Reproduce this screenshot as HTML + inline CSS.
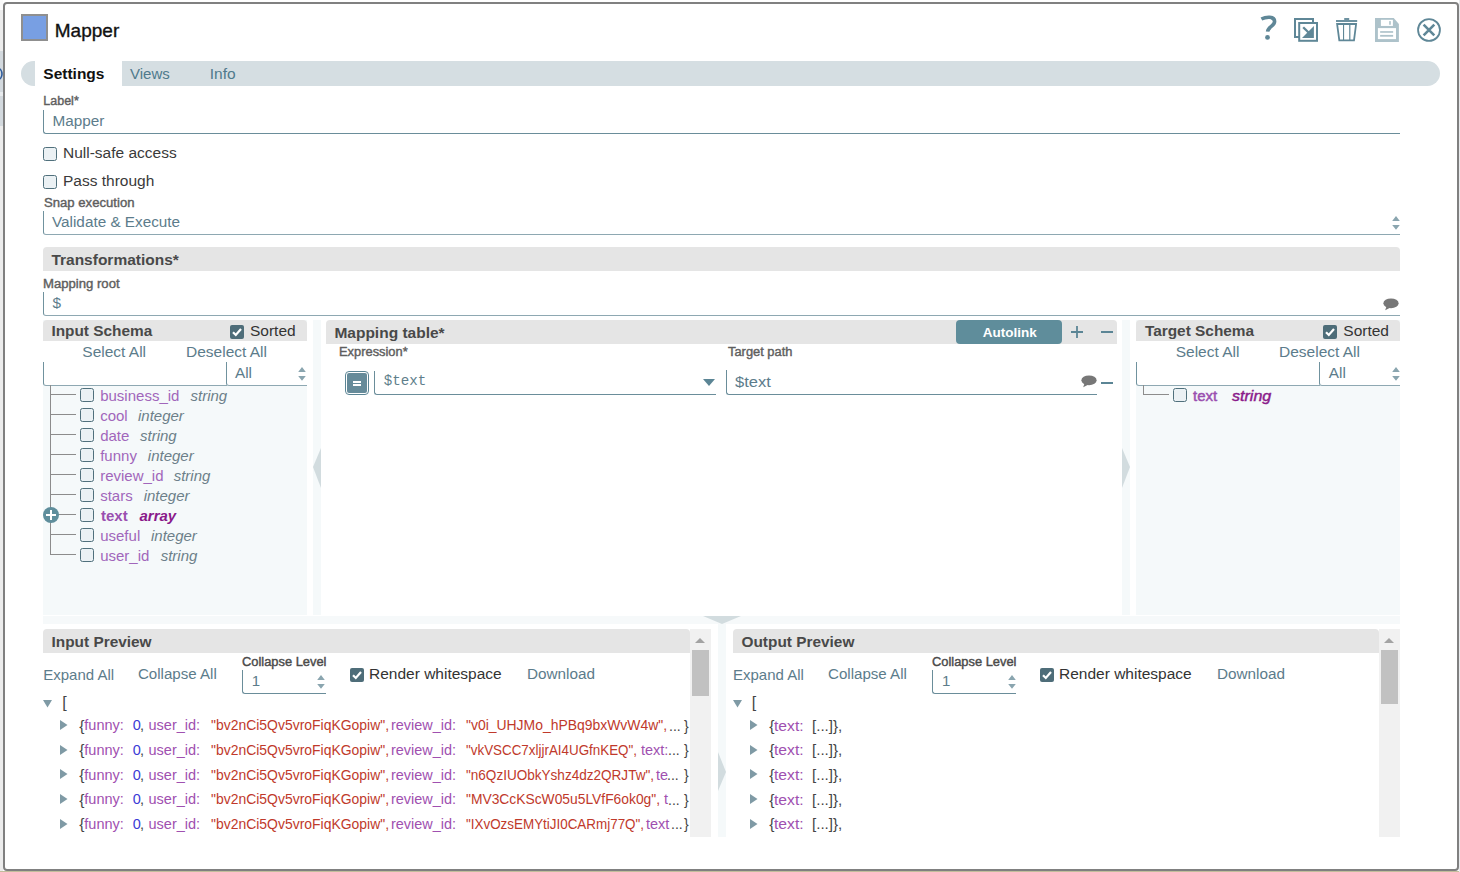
<!DOCTYPE html>
<html><head><meta charset="utf-8"><style>
html,body{margin:0;padding:0;width:1460px;height:872px;overflow:hidden;background:#fff;font-family:"Liberation Sans",sans-serif;}
.t{position:absolute;white-space:nowrap;}
.r{position:absolute;}
</style></head><body>
<div class="r" style="left:0px;top:0px;width:3px;height:872px;background:#ececec;"></div>
<div class="r" style="left:0px;top:51px;width:3px;height:75px;background:#d3d9de;"></div>
<div class="r" style="left:0px;top:92px;width:3px;height:4px;background:#e8ebee;"></div>
<svg class="r" style="left:0px;top:66px" width="3" height="16" viewBox="0 0 3 16"><ellipse cx="-2" cy="8" rx="4" ry="5.5" fill="none" stroke="#2f5d9e" stroke-width="1.6"/></svg>
<div class="r" style="left:0px;top:0px;width:3px;height:10px;background:#fafafa;"></div>
<div class="r" style="left:0px;top:871px;width:1460px;height:1px;background:#c2bd9c;"></div>
<div class="r" style="left:1459px;top:0px;width:1px;height:872px;background:#e8eaec;"></div>
<div class="r" style="left:3px;top:2px;width:1452px;height:865px;border:2px solid #808080;border-radius:4px;background:#fff;"></div>
<div class="r" style="left:21px;top:14px;width:23px;height:23px;border:2px solid #8f8f8f;background:#789fe3;"></div>
<div class="t" style="left:54.8px;top:21.32px;font-size:19px;line-height:19px;color:#111;font-weight:normal;font-style:normal;font-family:'Liberation Sans', sans-serif;-webkit-text-stroke:0.35px #111;">Mapper</div>
<svg class="r" style="left:1254px;top:12px" width="30" height="34" viewBox="0 0 30 34"><path d="M7.4 7 C11 5.2 20.6 3.4 20.6 9.6 C20.6 14.2 14 14.6 13.6 19.6" fill="none" stroke="#5f8797" stroke-width="3.6"/><circle cx="13.5" cy="25.4" r="2.4" fill="#5f8797"/></svg>
<svg class="r" style="left:1288px;top:12px" width="76" height="34" viewBox="0 0 76 34"><path d="M11 25 H7 V7 H25 V10.8" fill="none" stroke="#5f8797" stroke-width="2"/><rect x="11.2" y="11" width="17.8" height="17.8" fill="#fff" stroke="#5f8797" stroke-width="2"/><path d="M25.9 14 V25.9 H14 Z" fill="#5f8797"/><path d="M15.2 15.2 L21 21" stroke="#5f8797" stroke-width="2.3"/><rect x="56.2" y="6.1" width="5" height="1.8" fill="#5f8797"/><rect x="48" y="8.1" width="21.2" height="1.8" fill="#5f8797"/><path d="M49.1 12 H68.1 L66 28.3 H51.3 Z" fill="none" stroke="#5f8797" stroke-width="1.8"/><rect x="55" y="12" width="1.1" height="16.5" fill="#5f8797"/><rect x="61.2" y="12" width="1.2" height="16.5" fill="#5f8797"/></svg>
<svg class="r" style="left:1370px;top:12px" width="76" height="34" viewBox="0 0 76 34"><path d="M5 6.1 H23.7 L28.9 12 V29.9 H5 Z" fill="#adc2ca"/><rect x="10.9" y="7.8" width="12" height="6.15" fill="#fff"/><rect x="19.2" y="9.1" width="1.6" height="3.65" fill="#adc2ca"/><rect x="7.9" y="16.1" width="18.1" height="11" fill="#fff"/><rect x="10.15" y="19.15" width="13" height="1.65" fill="#adc2ca"/><rect x="10.15" y="22.9" width="13" height="1.8" fill="#adc2ca"/><circle cx="59" cy="18" r="10.95" fill="none" stroke="#5f8797" stroke-width="1.8"/><path d="M53.6 12.7 L64.3 23.3 M64.3 12.7 L53.6 23.3" stroke="#5f8797" stroke-width="2.6"/></svg>
<div class="r" style="left:21px;top:61px;width:1419px;height:25px;background:#d5dee2;border-radius:13px;"></div>
<div class="r" style="left:35px;top:61px;width:87px;height:25px;background:#fff;"></div>
<div class="t" style="left:43.3px;top:65.68px;font-size:15.5px;line-height:15.5px;color:#111;font-weight:bold;font-style:normal;font-family:'Liberation Sans', sans-serif;">Settings</div>
<div class="t" style="left:130px;top:66.10px;font-size:15px;line-height:15px;color:#4f7a8c;font-weight:normal;font-style:normal;font-family:'Liberation Sans', sans-serif;">Views</div>
<div class="t" style="left:209.8px;top:65.68px;font-size:15.5px;line-height:15.5px;color:#4f7a8c;font-weight:normal;font-style:normal;font-family:'Liberation Sans', sans-serif;">Info</div>
<div class="t" style="left:43.3px;top:95.22px;font-size:12.5px;line-height:12.5px;color:#5e5e5e;font-weight:normal;font-style:normal;font-family:'Liberation Sans', sans-serif;-webkit-text-stroke:0.4px #5e5e5e;transform:scaleX(1.0);transform-origin:0 0;">Label*</div>
<div class="r" style="left:43px;top:110px;width:1357px;height:24px;border-left:1px solid #6a8d9a;border-bottom:1px solid #6a8d9a;border-bottom-left-radius:3px;box-sizing:border-box;"></div>
<div class="t" style="left:52.5px;top:112.75px;font-size:15.3px;line-height:15.3px;color:#5c7c8b;font-weight:normal;font-style:normal;font-family:'Liberation Sans', sans-serif;">Mapper</div>
<div class="r" style="left:43px;top:147px;width:14px;height:14px;border:1.3px solid #50707c;background:#ebf1f4;border-radius:2.5px;box-sizing:border-box;"></div>
<div class="t" style="left:63px;top:145.18px;font-size:15.5px;line-height:15.5px;color:#3a3a3a;font-weight:normal;font-style:normal;font-family:'Liberation Sans', sans-serif;">Null-safe access</div>
<div class="r" style="left:43px;top:175px;width:14px;height:14px;border:1.3px solid #50707c;background:#ebf1f4;border-radius:2.5px;box-sizing:border-box;"></div>
<div class="t" style="left:63px;top:173.18px;font-size:15.5px;line-height:15.5px;color:#3a3a3a;font-weight:normal;font-style:normal;font-family:'Liberation Sans', sans-serif;">Pass through</div>
<div class="t" style="left:43.5px;top:196.72px;font-size:12.5px;line-height:12.5px;color:#5e5e5e;font-weight:normal;font-style:normal;font-family:'Liberation Sans', sans-serif;-webkit-text-stroke:0.4px #5e5e5e;transform:scaleX(1.05);transform-origin:0 0;">Snap execution</div>
<div class="r" style="left:43px;top:211px;width:1357px;height:24px;border-left:1px solid #70929e;border-bottom:1px solid #8ea8b2;border-bottom-left-radius:3px;box-sizing:border-box;"></div>
<div class="t" style="left:52px;top:213.55px;font-size:15.3px;line-height:15.3px;color:#5c7c8b;font-weight:normal;font-style:normal;font-family:'Liberation Sans', sans-serif;">Validate &amp; Execute</div>
<svg class="r" style="left:1391px;top:216px" width="10" height="14" viewBox="0 0 10 14"><path d="M1.2 5 L5 0 L8.8 5Z M1.2 9 L5 13.7 L8.8 9Z" fill="#8aa5af"/></svg>
<div class="r" style="left:43px;top:247px;width:1357px;height:24px;background:#e5e5e5;border-radius:4px 4px 0 0;"></div>
<div class="t" style="left:51.4px;top:251.88px;font-size:15.5px;line-height:15.5px;color:#494949;font-weight:bold;font-style:normal;font-family:'Liberation Sans', sans-serif;">Transformations*</div>
<div class="t" style="left:43px;top:277.72px;font-size:12.5px;line-height:12.5px;color:#5e5e5e;font-weight:normal;font-style:normal;font-family:'Liberation Sans', sans-serif;-webkit-text-stroke:0.4px #5e5e5e;transform:scaleX(1.05);transform-origin:0 0;">Mapping root</div>
<div class="r" style="left:43px;top:292px;width:1357px;height:24px;border-left:1px solid #70929e;border-bottom:1px solid #8ea8b2;border-bottom-left-radius:3px;box-sizing:border-box;"></div>
<div class="t" style="left:52.5px;top:295.25px;font-size:15.3px;line-height:15.3px;color:#5c7c8b;font-weight:normal;font-style:normal;font-family:'Liberation Sans', sans-serif;">$</div>
<svg class="r" style="left:1382.5px;top:297.5px" width="17" height="13" viewBox="0 0 17 13"><ellipse cx="8" cy="5.3" rx="7.6" ry="4.9" fill="#777"/><path d="M3.6 8 L2.2 12.2 L7.6 9.6Z" fill="#777"/></svg>
<div class="r" style="left:43px;top:320px;width:264px;height:295px;background:#f5f9fa;"></div>
<div class="r" style="left:43px;top:341px;width:264px;height:44px;background:#fff;"></div>
<div class="r" style="left:43px;top:320px;width:264px;height:21px;background:#e5e5e5;border-radius:4px 4px 0 0;"></div>
<div class="t" style="left:51.4px;top:322.96px;font-size:15.4px;line-height:15.4px;color:#494949;font-weight:bold;font-style:normal;font-family:'Liberation Sans', sans-serif;">Input Schema</div>
<div class="r" style="left:230px;top:325px;width:14px;height:14px;background:#4e6d79;border-radius:2px;"><svg width="14" height="14" viewBox="0 0 14 14" style="position:absolute;left:0;top:0"><path d="M3 7.2 L5.8 10 L11 4" fill="none" stroke="#fff" stroke-width="2.2"/></svg></div>
<div class="t" style="left:250px;top:322.88px;font-size:15.5px;line-height:15.5px;color:#333;font-weight:normal;font-style:normal;font-family:'Liberation Sans', sans-serif;">Sorted</div>
<div class="t" style="left:82.3px;top:343.88px;font-size:15.5px;line-height:15.5px;color:#5c7c8b;font-weight:normal;font-style:normal;font-family:'Liberation Sans', sans-serif;">Select All</div>
<div class="t" style="left:186px;top:343.88px;font-size:15.5px;line-height:15.5px;color:#5c7c8b;font-weight:normal;font-style:normal;font-family:'Liberation Sans', sans-serif;">Deselect All</div>
<div class="r" style="left:43px;top:362px;width:184px;height:24px;border-left:1px solid #70929e;border-bottom:1px solid #8ea8b2;border-bottom-left-radius:3px;box-sizing:border-box;"></div>
<div class="r" style="left:226px;top:362px;width:81px;height:24px;border-left:1px solid #70929e;border-bottom:1px solid #8ea8b2;border-bottom-left-radius:3px;box-sizing:border-box;"></div>
<div class="t" style="left:235px;top:365.05px;font-size:15.3px;line-height:15.3px;color:#5c7c8b;font-weight:normal;font-style:normal;font-family:'Liberation Sans', sans-serif;">All</div>
<svg class="r" style="left:297px;top:367px" width="10" height="14" viewBox="0 0 10 14"><path d="M1.2 5 L5 0 L8.8 5Z M1.2 9 L5 13.7 L8.8 9Z" fill="#8aa5af"/></svg>
<div class="r" style="left:50px;top:385px;width:1px;height:170px;background:#8c8c8c;"></div>
<div class="r" style="left:50px;top:394px;width:26px;height:1px;background:#8c8c8c;"></div>
<div class="r" style="left:80px;top:388px;width:14px;height:14px;border:1.3px solid #50707c;background:#ebf1f4;border-radius:2.5px;box-sizing:border-box;"></div>
<div class="t" style="left:100.2px;top:388.30px;font-size:15px;line-height:15px;color:#a166bb;font-weight:normal;font-style:normal;font-family:'Liberation Sans', sans-serif;">business_id</div>
<div class="t" style="left:190.5px;top:388.30px;font-size:15px;line-height:15px;color:#6c7f89;font-weight:normal;font-style:italic;font-family:'Liberation Sans', sans-serif;">string</div>
<div class="r" style="left:50px;top:414px;width:26px;height:1px;background:#8c8c8c;"></div>
<div class="r" style="left:80px;top:408px;width:14px;height:14px;border:1.3px solid #50707c;background:#ebf1f4;border-radius:2.5px;box-sizing:border-box;"></div>
<div class="t" style="left:100.2px;top:408.30px;font-size:15px;line-height:15px;color:#a166bb;font-weight:normal;font-style:normal;font-family:'Liberation Sans', sans-serif;">cool</div>
<div class="t" style="left:138px;top:408.30px;font-size:15px;line-height:15px;color:#6c7f89;font-weight:normal;font-style:italic;font-family:'Liberation Sans', sans-serif;">integer</div>
<div class="r" style="left:50px;top:434px;width:26px;height:1px;background:#8c8c8c;"></div>
<div class="r" style="left:80px;top:428px;width:14px;height:14px;border:1.3px solid #50707c;background:#ebf1f4;border-radius:2.5px;box-sizing:border-box;"></div>
<div class="t" style="left:100.2px;top:428.30px;font-size:15px;line-height:15px;color:#a166bb;font-weight:normal;font-style:normal;font-family:'Liberation Sans', sans-serif;">date</div>
<div class="t" style="left:140px;top:428.30px;font-size:15px;line-height:15px;color:#6c7f89;font-weight:normal;font-style:italic;font-family:'Liberation Sans', sans-serif;">string</div>
<div class="r" style="left:50px;top:454px;width:26px;height:1px;background:#8c8c8c;"></div>
<div class="r" style="left:80px;top:448px;width:14px;height:14px;border:1.3px solid #50707c;background:#ebf1f4;border-radius:2.5px;box-sizing:border-box;"></div>
<div class="t" style="left:100.2px;top:448.30px;font-size:15px;line-height:15px;color:#a166bb;font-weight:normal;font-style:normal;font-family:'Liberation Sans', sans-serif;">funny</div>
<div class="t" style="left:147.8px;top:448.30px;font-size:15px;line-height:15px;color:#6c7f89;font-weight:normal;font-style:italic;font-family:'Liberation Sans', sans-serif;">integer</div>
<div class="r" style="left:50px;top:474px;width:26px;height:1px;background:#8c8c8c;"></div>
<div class="r" style="left:80px;top:468px;width:14px;height:14px;border:1.3px solid #50707c;background:#ebf1f4;border-radius:2.5px;box-sizing:border-box;"></div>
<div class="t" style="left:100.2px;top:468.30px;font-size:15px;line-height:15px;color:#a166bb;font-weight:normal;font-style:normal;font-family:'Liberation Sans', sans-serif;">review_id</div>
<div class="t" style="left:173.7px;top:468.30px;font-size:15px;line-height:15px;color:#6c7f89;font-weight:normal;font-style:italic;font-family:'Liberation Sans', sans-serif;">string</div>
<div class="r" style="left:50px;top:494px;width:26px;height:1px;background:#8c8c8c;"></div>
<div class="r" style="left:80px;top:488px;width:14px;height:14px;border:1.3px solid #50707c;background:#ebf1f4;border-radius:2.5px;box-sizing:border-box;"></div>
<div class="t" style="left:100.2px;top:488.30px;font-size:15px;line-height:15px;color:#a166bb;font-weight:normal;font-style:normal;font-family:'Liberation Sans', sans-serif;">stars</div>
<div class="t" style="left:143.7px;top:488.30px;font-size:15px;line-height:15px;color:#6c7f89;font-weight:normal;font-style:italic;font-family:'Liberation Sans', sans-serif;">integer</div>
<div class="r" style="left:50px;top:514px;width:26px;height:1px;background:#8c8c8c;"></div>
<div class="r" style="left:80px;top:508px;width:14px;height:14px;border:1.3px solid #50707c;background:#ebf1f4;border-radius:2.5px;box-sizing:border-box;"></div>
<div class="t" style="left:101px;top:508.30px;font-size:15px;line-height:15px;color:#9a4fb0;font-weight:bold;font-style:normal;font-family:'Liberation Sans', sans-serif;">text</div>
<div class="t" style="left:139.5px;top:508.30px;font-size:15px;line-height:15px;color:#8a1a8a;font-weight:bold;font-style:italic;font-family:'Liberation Sans', sans-serif;">array</div>
<div class="r" style="left:50px;top:534px;width:26px;height:1px;background:#8c8c8c;"></div>
<div class="r" style="left:80px;top:528px;width:14px;height:14px;border:1.3px solid #50707c;background:#ebf1f4;border-radius:2.5px;box-sizing:border-box;"></div>
<div class="t" style="left:100.2px;top:528.30px;font-size:15px;line-height:15px;color:#a166bb;font-weight:normal;font-style:normal;font-family:'Liberation Sans', sans-serif;">useful</div>
<div class="t" style="left:151px;top:528.30px;font-size:15px;line-height:15px;color:#6c7f89;font-weight:normal;font-style:italic;font-family:'Liberation Sans', sans-serif;">integer</div>
<div class="r" style="left:50px;top:554px;width:26px;height:1px;background:#8c8c8c;"></div>
<div class="r" style="left:80px;top:548px;width:14px;height:14px;border:1.3px solid #50707c;background:#ebf1f4;border-radius:2.5px;box-sizing:border-box;"></div>
<div class="t" style="left:100.2px;top:548.30px;font-size:15px;line-height:15px;color:#a166bb;font-weight:normal;font-style:normal;font-family:'Liberation Sans', sans-serif;">user_id</div>
<div class="t" style="left:160.7px;top:548.30px;font-size:15px;line-height:15px;color:#6c7f89;font-weight:normal;font-style:italic;font-family:'Liberation Sans', sans-serif;">string</div>
<svg class="r" style="left:43px;top:506.5px" width="16" height="16" viewBox="0 0 16 16"><circle cx="8" cy="8" r="8" fill="#5f8e9c"/><path d="M8 3v10M3 8h10" stroke="#fff" stroke-width="2"/></svg>
<div class="r" style="left:313px;top:320px;width:8px;height:295px;background:#f5f9fa;"></div>
<svg class="r" style="left:313px;top:448px" width="8" height="40" viewBox="0 0 8 40"><path d="M8 0 L0 19 L8 40Z" fill="#d2dcdf"/></svg>
<div class="r" style="left:1122px;top:320px;width:8px;height:295px;background:#f5f9fa;"></div>
<svg class="r" style="left:1122px;top:448px" width="8" height="40" viewBox="0 0 8 40"><path d="M0 0 L8 19 L0 40Z" fill="#d2dcdf"/></svg>
<div class="r" style="left:326px;top:320px;width:791px;height:24px;background:#e5e5e5;border-radius:4px 4px 0 0;"></div>
<div class="t" style="left:334.4px;top:325.28px;font-size:15.5px;line-height:15.5px;color:#494949;font-weight:bold;font-style:normal;font-family:'Liberation Sans', sans-serif;">Mapping table*</div>
<div class="r" style="left:956px;top:320px;width:106px;height:24px;background:#5f8d9b;border-radius:4px;"></div>
<div class="t" style="left:982.7px;top:325.57px;font-size:13.5px;line-height:13.5px;color:#fff;font-weight:bold;font-style:normal;font-family:'Liberation Sans', sans-serif;">Autolink</div>
<svg class="r" style="left:1070px;top:325px" width="14" height="14" viewBox="0 0 14 14"><path d="M7 1v12M1 7h12" stroke="#5b8595" stroke-width="1.8"/></svg>
<div class="r" style="left:1101px;top:331px;width:12px;height:2px;background:#5b8595;"></div>
<div class="t" style="left:338.5px;top:346.42px;font-size:12.5px;line-height:12.5px;color:#5e5e5e;font-weight:normal;font-style:normal;font-family:'Liberation Sans', sans-serif;-webkit-text-stroke:0.4px #5e5e5e;transform:scaleX(1.03);transform-origin:0 0;">Expression*</div>
<div class="t" style="left:728px;top:346.42px;font-size:12.5px;line-height:12.5px;color:#5e5e5e;font-weight:normal;font-style:normal;font-family:'Liberation Sans', sans-serif;-webkit-text-stroke:0.4px #5e5e5e;transform:scaleX(1.03);transform-origin:0 0;">Target path</div>
<div class="r" style="left:345px;top:371px;width:24px;height:24px;border:1px solid #5b8595;border-radius:4px;box-sizing:border-box;background:#fff;"></div>
<div class="r" style="left:347px;top:373px;width:20px;height:20px;background:#668b9a;border-radius:2px;"></div>
<div class="r" style="left:353px;top:380.6px;width:8px;height:2px;background:#fff;"></div>
<div class="r" style="left:353px;top:384px;width:8px;height:2px;background:#fff;"></div>
<div class="r" style="left:374px;top:371px;width:342px;height:24px;border-left:1px solid #6a8d9a;border-bottom:1px solid #6a8d9a;border-bottom-left-radius:3px;box-sizing:border-box;"></div>
<div class="t" style="left:383.8px;top:374.18px;font-size:14.2px;line-height:14.2px;color:#5f7f8c;font-weight:normal;font-style:normal;font-family:'Liberation Mono', monospace;">$text</div>
<svg class="r" style="left:703px;top:379px" width="12" height="7" viewBox="0 0 12 7"><path d="M0 0 L12 0 L6 7Z" fill="#5b8595"/></svg>
<div class="r" style="left:726px;top:370px;width:371px;height:25px;border-left:1px solid #6a8d9a;border-bottom:1px solid #6a8d9a;border-bottom-left-radius:3px;box-sizing:border-box;"></div>
<div class="t" style="left:735px;top:374.05px;font-size:15.3px;line-height:15.3px;color:#5c7c8b;font-weight:normal;font-style:normal;font-family:'Liberation Sans', sans-serif;transform:scaleX(1.08);transform-origin:0 0;">$text</div>
<svg class="r" style="left:1080.5px;top:374.5px" width="17" height="13" viewBox="0 0 17 13"><ellipse cx="8" cy="5.3" rx="7.6" ry="4.9" fill="#777"/><path d="M3.6 8 L2.2 12.2 L7.6 9.6Z" fill="#777"/></svg>
<div class="r" style="left:1101px;top:382px;width:12px;height:2px;background:#5b8595;"></div>
<div class="r" style="left:1136px;top:320px;width:264px;height:295px;background:#f5f9fa;"></div>
<div class="r" style="left:1136px;top:341px;width:264px;height:44px;background:#fff;"></div>
<div class="r" style="left:1136px;top:320px;width:264px;height:21px;background:#e5e5e5;border-radius:4px 4px 0 0;"></div>
<div class="t" style="left:1144.9px;top:322.96px;font-size:15.4px;line-height:15.4px;color:#494949;font-weight:bold;font-style:normal;font-family:'Liberation Sans', sans-serif;">Target Schema</div>
<div class="r" style="left:1323px;top:325px;width:14px;height:14px;background:#4e6d79;border-radius:2px;"><svg width="14" height="14" viewBox="0 0 14 14" style="position:absolute;left:0;top:0"><path d="M3 7.2 L5.8 10 L11 4" fill="none" stroke="#fff" stroke-width="2.2"/></svg></div>
<div class="t" style="left:1343.3px;top:322.88px;font-size:15.5px;line-height:15.5px;color:#333;font-weight:normal;font-style:normal;font-family:'Liberation Sans', sans-serif;">Sorted</div>
<div class="t" style="left:1175.7px;top:343.88px;font-size:15.5px;line-height:15.5px;color:#5c7c8b;font-weight:normal;font-style:normal;font-family:'Liberation Sans', sans-serif;">Select All</div>
<div class="t" style="left:1279px;top:343.88px;font-size:15.5px;line-height:15.5px;color:#5c7c8b;font-weight:normal;font-style:normal;font-family:'Liberation Sans', sans-serif;">Deselect All</div>
<div class="r" style="left:1136px;top:362px;width:184px;height:24px;border-left:1px solid #70929e;border-bottom:1px solid #8ea8b2;border-bottom-left-radius:3px;box-sizing:border-box;"></div>
<div class="r" style="left:1319px;top:362px;width:81px;height:24px;border-left:1px solid #70929e;border-bottom:1px solid #8ea8b2;border-bottom-left-radius:3px;box-sizing:border-box;"></div>
<div class="t" style="left:1328.8px;top:365.05px;font-size:15.3px;line-height:15.3px;color:#5c7c8b;font-weight:normal;font-style:normal;font-family:'Liberation Sans', sans-serif;">All</div>
<svg class="r" style="left:1391px;top:367px" width="10" height="14" viewBox="0 0 10 14"><path d="M1.2 5 L5 0 L8.8 5Z M1.2 9 L5 13.7 L8.8 9Z" fill="#8aa5af"/></svg>
<div class="r" style="left:1143px;top:385px;width:1px;height:9px;background:#8c8c8c;"></div>
<div class="r" style="left:1143px;top:394px;width:26px;height:1px;background:#8c8c8c;"></div>
<div class="r" style="left:1173px;top:388px;width:14px;height:14px;border:1.3px solid #50707c;background:#ebf1f4;border-radius:2.5px;box-sizing:border-box;"></div>
<div class="t" style="left:1193px;top:388.30px;font-size:15px;line-height:15px;color:#9a4fb0;font-weight:normal;font-style:normal;font-family:'Liberation Sans', sans-serif;-webkit-text-stroke:0.45px #9a4fb0;">text</div>
<div class="t" style="left:1232px;top:388.30px;font-size:15px;line-height:15px;color:#8a1a8a;font-weight:normal;font-style:italic;font-family:'Liberation Sans', sans-serif;-webkit-text-stroke:0.45px #8a1a8a;transform:scaleX(1.07);transform-origin:0 0;">string</div>
<div class="r" style="left:43px;top:616px;width:1357px;height:8px;background:#f6f9fa;"></div>
<svg class="r" style="left:703px;top:616px" width="38" height="8" viewBox="0 0 38 8"><path d="M0 0 L38 0 L19 8Z" fill="#d2dcdf"/></svg>
<div class="r" style="left:43px;top:629px;width:647px;height:24px;background:#e5e5e5;border-radius:4px 4px 0 0;"></div>
<div class="t" style="left:51.5px;top:633.96px;font-size:15.4px;line-height:15.4px;color:#494949;font-weight:bold;font-style:normal;font-family:'Liberation Sans', sans-serif;">Input Preview</div>
<div class="r" style="left:690px;top:629px;width:21px;height:208px;background:#f1f1f1;"></div>
<div class="r" style="left:691.5px;top:650px;width:17px;height:46px;background:#c1c1c1;"></div>
<svg class="r" style="left:695px;top:637px" width="10" height="7" viewBox="0 0 10 7"><path d="M0 6 L5 1 L10 6Z" fill="#a3a3a3"/></svg>
<div class="t" style="left:43.2px;top:666.50px;font-size:15px;line-height:15px;color:#5c7c8b;font-weight:normal;font-style:normal;font-family:'Liberation Sans', sans-serif;">Expand All</div>
<div class="t" style="left:137.9px;top:666.42px;font-size:15.1px;line-height:15.1px;color:#5c7c8b;font-weight:normal;font-style:normal;font-family:'Liberation Sans', sans-serif;">Collapse All</div>
<div class="t" style="left:241.7px;top:655.72px;font-size:12.5px;line-height:12.5px;color:#4a4a4a;font-weight:normal;font-style:normal;font-family:'Liberation Sans', sans-serif;-webkit-text-stroke:0.4px #4a4a4a;transform:scaleX(1.03);transform-origin:0 0;">Collapse Level</div>
<div class="r" style="left:241.7px;top:670px;width:84px;height:24px;border-left:1px solid #6a8d9a;border-bottom:1px solid #6a8d9a;border-bottom-left-radius:3px;box-sizing:border-box;"></div>
<div class="t" style="left:251.7px;top:673.30px;font-size:15px;line-height:15px;color:#5c7c8b;font-weight:normal;font-style:normal;font-family:'Liberation Sans', sans-serif;">1</div>
<svg class="r" style="left:316.2px;top:675px" width="10" height="14" viewBox="0 0 10 14"><path d="M1.2 5 L5 0 L8.8 5Z M1.2 9 L5 13.7 L8.8 9Z" fill="#8aa5af"/></svg>
<div class="r" style="left:350px;top:668px;width:14px;height:14px;background:#4e6d79;border-radius:2px;"><svg width="14" height="14" viewBox="0 0 14 14" style="position:absolute;left:0;top:0"><path d="M3 7.2 L5.8 10 L11 4" fill="none" stroke="#fff" stroke-width="2.2"/></svg></div>
<div class="t" style="left:369px;top:666.08px;font-size:15.5px;line-height:15.5px;color:#333;font-weight:normal;font-style:normal;font-family:'Liberation Sans', sans-serif;">Render whitespace</div>
<div class="t" style="left:527px;top:666.25px;font-size:15.3px;line-height:15.3px;color:#5c7c8b;font-weight:normal;font-style:normal;font-family:'Liberation Sans', sans-serif;">Download</div>
<div class="r" style="left:733px;top:629px;width:646px;height:24px;background:#e5e5e5;border-radius:4px 4px 0 0;"></div>
<div class="t" style="left:741.5px;top:633.96px;font-size:15.4px;line-height:15.4px;color:#494949;font-weight:bold;font-style:normal;font-family:'Liberation Sans', sans-serif;">Output Preview</div>
<div class="r" style="left:1379px;top:629px;width:21px;height:208px;background:#f1f1f1;"></div>
<div class="r" style="left:1380.5px;top:650px;width:17px;height:54px;background:#c1c1c1;"></div>
<svg class="r" style="left:1384px;top:637px" width="10" height="7" viewBox="0 0 10 7"><path d="M0 6 L5 1 L10 6Z" fill="#a3a3a3"/></svg>
<div class="t" style="left:733px;top:666.50px;font-size:15px;line-height:15px;color:#5c7c8b;font-weight:normal;font-style:normal;font-family:'Liberation Sans', sans-serif;">Expand All</div>
<div class="t" style="left:828px;top:666.42px;font-size:15.1px;line-height:15.1px;color:#5c7c8b;font-weight:normal;font-style:normal;font-family:'Liberation Sans', sans-serif;">Collapse All</div>
<div class="t" style="left:932px;top:655.72px;font-size:12.5px;line-height:12.5px;color:#4a4a4a;font-weight:normal;font-style:normal;font-family:'Liberation Sans', sans-serif;-webkit-text-stroke:0.4px #4a4a4a;transform:scaleX(1.03);transform-origin:0 0;">Collapse Level</div>
<div class="r" style="left:932px;top:670px;width:84px;height:24px;border-left:1px solid #6a8d9a;border-bottom:1px solid #6a8d9a;border-bottom-left-radius:3px;box-sizing:border-box;"></div>
<div class="t" style="left:942px;top:673.30px;font-size:15px;line-height:15px;color:#5c7c8b;font-weight:normal;font-style:normal;font-family:'Liberation Sans', sans-serif;">1</div>
<svg class="r" style="left:1006.5px;top:675px" width="10" height="14" viewBox="0 0 10 14"><path d="M1.2 5 L5 0 L8.8 5Z M1.2 9 L5 13.7 L8.8 9Z" fill="#8aa5af"/></svg>
<div class="r" style="left:1040px;top:668px;width:14px;height:14px;background:#4e6d79;border-radius:2px;"><svg width="14" height="14" viewBox="0 0 14 14" style="position:absolute;left:0;top:0"><path d="M3 7.2 L5.8 10 L11 4" fill="none" stroke="#fff" stroke-width="2.2"/></svg></div>
<div class="t" style="left:1059px;top:666.08px;font-size:15.5px;line-height:15.5px;color:#333;font-weight:normal;font-style:normal;font-family:'Liberation Sans', sans-serif;">Render whitespace</div>
<div class="t" style="left:1217px;top:666.25px;font-size:15.3px;line-height:15.3px;color:#5c7c8b;font-weight:normal;font-style:normal;font-family:'Liberation Sans', sans-serif;">Download</div>
<div class="r" style="left:718px;top:624px;width:8px;height:213px;background:#f5f9fa;"></div>
<svg class="r" style="left:718px;top:752px" width="8" height="39" viewBox="0 0 8 39"><path d="M0 0 L8 20 L0 39Z" fill="#d2dcdf"/></svg>
<svg class="r" style="left:43px;top:700px" width="9" height="8" viewBox="0 0 9 8"><path d="M0 0 L9 0 L4.5 7.5Z" fill="#7f9aa5"/></svg>
<div class="t" style="left:62.3px;top:695.26px;font-size:16px;line-height:16px;color:#444;font-weight:normal;font-style:normal;font-family:'Liberation Sans', sans-serif;">[</div>
<svg class="r" style="left:59.8px;top:720.0px" width="8" height="10" viewBox="0 0 8 10"><path d="M0 0 L7.5 5 L0 10Z" fill="#7f9aa5"/></svg>
<div class="t" style="left:79.3px;top:717.68px;font-size:15.5px;line-height:15.5px;color:#444;font-weight:normal;font-style:normal;font-family:'Liberation Sans', sans-serif;">{</div>
<div class="t" style="left:84.3px;top:718.23px;font-size:14.5px;line-height:14.5px;color:#a050b0;font-weight:normal;font-style:normal;font-family:'Liberation Sans', sans-serif;">funny:</div>
<div class="t" style="left:132.7px;top:718.23px;font-size:14.5px;line-height:14.5px;color:#3b3bd6;font-weight:normal;font-style:normal;font-family:'Liberation Sans', sans-serif;">0</div>
<div class="t" style="left:140px;top:718.23px;font-size:14.5px;line-height:14.5px;color:#444;font-weight:normal;font-style:normal;font-family:'Liberation Sans', sans-serif;">,</div>
<div class="t" style="left:148.5px;top:718.23px;font-size:14.5px;line-height:14.5px;color:#a050b0;font-weight:normal;font-style:normal;font-family:'Liberation Sans', sans-serif;">user_id:</div>
<div class="t" style="left:210.8px;top:718.23px;font-size:14.5px;line-height:14.5px;color:#c0392b;font-weight:normal;font-style:normal;font-family:'Liberation Sans', sans-serif;transform:scaleX(0.9614);transform-origin:0 0;">"bv2nCi5Qv5vroFiqKGopiw",</div>
<div class="t" style="left:391px;top:718.23px;font-size:14.5px;line-height:14.5px;color:#a050b0;font-weight:normal;font-style:normal;font-family:'Liberation Sans', sans-serif;transform:scaleX(0.9959);transform-origin:0 0;">review_id:</div>
<div class="t" style="left:465.5px;top:718.23px;font-size:14.5px;line-height:14.5px;color:#c0392b;font-weight:normal;font-style:normal;font-family:'Liberation Sans', sans-serif;transform:scaleX(0.9604);transform-origin:0 0;">"v0i_UHJMo_hPBq9bxWvW4w",</div>
<div class="t" style="left:669px;top:718.65px;font-size:14px;line-height:14px;color:#444;font-weight:normal;font-style:normal;font-family:'Liberation Sans', sans-serif;">...</div>
<div class="t" style="left:684px;top:718.65px;font-size:14px;line-height:14px;color:#444;font-weight:normal;font-style:normal;font-family:'Liberation Sans', sans-serif;">}</div>
<svg class="r" style="left:750px;top:720.0px" width="8" height="10" viewBox="0 0 8 10"><path d="M0 0 L7.5 5 L0 10Z" fill="#7f9aa5"/></svg>
<div class="t" style="left:769.3px;top:717.68px;font-size:15.5px;line-height:15.5px;color:#444;font-weight:normal;font-style:normal;font-family:'Liberation Sans', sans-serif;">{</div>
<div class="t" style="left:773.5px;top:718.65px;font-size:14px;line-height:14px;color:#a050b0;font-weight:normal;font-style:normal;font-family:'Liberation Sans', sans-serif;transform:scaleX(1.12);transform-origin:0 0;">text:</div>
<div class="t" style="left:812px;top:718.65px;font-size:14px;line-height:14px;color:#444;font-weight:normal;font-style:normal;font-family:'Liberation Sans', sans-serif;transform:scaleX(1.08);transform-origin:0 0;">[...]},</div>
<svg class="r" style="left:59.8px;top:744.7px" width="8" height="10" viewBox="0 0 8 10"><path d="M0 0 L7.5 5 L0 10Z" fill="#7f9aa5"/></svg>
<div class="t" style="left:79.3px;top:742.38px;font-size:15.5px;line-height:15.5px;color:#444;font-weight:normal;font-style:normal;font-family:'Liberation Sans', sans-serif;">{</div>
<div class="t" style="left:84.3px;top:742.93px;font-size:14.5px;line-height:14.5px;color:#a050b0;font-weight:normal;font-style:normal;font-family:'Liberation Sans', sans-serif;">funny:</div>
<div class="t" style="left:132.7px;top:742.93px;font-size:14.5px;line-height:14.5px;color:#3b3bd6;font-weight:normal;font-style:normal;font-family:'Liberation Sans', sans-serif;">0</div>
<div class="t" style="left:140px;top:742.93px;font-size:14.5px;line-height:14.5px;color:#444;font-weight:normal;font-style:normal;font-family:'Liberation Sans', sans-serif;">,</div>
<div class="t" style="left:148.5px;top:742.93px;font-size:14.5px;line-height:14.5px;color:#a050b0;font-weight:normal;font-style:normal;font-family:'Liberation Sans', sans-serif;">user_id:</div>
<div class="t" style="left:210.8px;top:742.93px;font-size:14.5px;line-height:14.5px;color:#c0392b;font-weight:normal;font-style:normal;font-family:'Liberation Sans', sans-serif;transform:scaleX(0.9614);transform-origin:0 0;">"bv2nCi5Qv5vroFiqKGopiw",</div>
<div class="t" style="left:391px;top:742.93px;font-size:14.5px;line-height:14.5px;color:#a050b0;font-weight:normal;font-style:normal;font-family:'Liberation Sans', sans-serif;transform:scaleX(0.9959);transform-origin:0 0;">review_id:</div>
<div class="t" style="left:465.5px;top:742.93px;font-size:14.5px;line-height:14.5px;color:#c0392b;font-weight:normal;font-style:normal;font-family:'Liberation Sans', sans-serif;transform:scaleX(0.9237);transform-origin:0 0;">"vkVSCC7xljjrAI4UGfnKEQ",</div>
<div class="t" style="left:641px;top:742.93px;font-size:14.5px;line-height:14.5px;color:#a050b0;font-weight:normal;font-style:normal;font-family:'Liberation Sans', sans-serif;">text:</div>
<div class="t" style="left:668px;top:743.35px;font-size:14px;line-height:14px;color:#444;font-weight:normal;font-style:normal;font-family:'Liberation Sans', sans-serif;">...</div>
<div class="t" style="left:684px;top:743.35px;font-size:14px;line-height:14px;color:#444;font-weight:normal;font-style:normal;font-family:'Liberation Sans', sans-serif;">}</div>
<svg class="r" style="left:750px;top:744.7px" width="8" height="10" viewBox="0 0 8 10"><path d="M0 0 L7.5 5 L0 10Z" fill="#7f9aa5"/></svg>
<div class="t" style="left:769.3px;top:742.38px;font-size:15.5px;line-height:15.5px;color:#444;font-weight:normal;font-style:normal;font-family:'Liberation Sans', sans-serif;">{</div>
<div class="t" style="left:773.5px;top:743.35px;font-size:14px;line-height:14px;color:#a050b0;font-weight:normal;font-style:normal;font-family:'Liberation Sans', sans-serif;transform:scaleX(1.12);transform-origin:0 0;">text:</div>
<div class="t" style="left:812px;top:743.35px;font-size:14px;line-height:14px;color:#444;font-weight:normal;font-style:normal;font-family:'Liberation Sans', sans-serif;transform:scaleX(1.08);transform-origin:0 0;">[...]},</div>
<svg class="r" style="left:59.8px;top:769.4px" width="8" height="10" viewBox="0 0 8 10"><path d="M0 0 L7.5 5 L0 10Z" fill="#7f9aa5"/></svg>
<div class="t" style="left:79.3px;top:767.08px;font-size:15.5px;line-height:15.5px;color:#444;font-weight:normal;font-style:normal;font-family:'Liberation Sans', sans-serif;">{</div>
<div class="t" style="left:84.3px;top:767.63px;font-size:14.5px;line-height:14.5px;color:#a050b0;font-weight:normal;font-style:normal;font-family:'Liberation Sans', sans-serif;">funny:</div>
<div class="t" style="left:132.7px;top:767.63px;font-size:14.5px;line-height:14.5px;color:#3b3bd6;font-weight:normal;font-style:normal;font-family:'Liberation Sans', sans-serif;">0</div>
<div class="t" style="left:140px;top:767.63px;font-size:14.5px;line-height:14.5px;color:#444;font-weight:normal;font-style:normal;font-family:'Liberation Sans', sans-serif;">,</div>
<div class="t" style="left:148.5px;top:767.63px;font-size:14.5px;line-height:14.5px;color:#a050b0;font-weight:normal;font-style:normal;font-family:'Liberation Sans', sans-serif;">user_id:</div>
<div class="t" style="left:210.8px;top:767.63px;font-size:14.5px;line-height:14.5px;color:#c0392b;font-weight:normal;font-style:normal;font-family:'Liberation Sans', sans-serif;transform:scaleX(0.9614);transform-origin:0 0;">"bv2nCi5Qv5vroFiqKGopiw",</div>
<div class="t" style="left:391px;top:767.63px;font-size:14.5px;line-height:14.5px;color:#a050b0;font-weight:normal;font-style:normal;font-family:'Liberation Sans', sans-serif;transform:scaleX(0.9959);transform-origin:0 0;">review_id:</div>
<div class="t" style="left:465.5px;top:767.63px;font-size:14.5px;line-height:14.5px;color:#c0392b;font-weight:normal;font-style:normal;font-family:'Liberation Sans', sans-serif;transform:scaleX(0.9341);transform-origin:0 0;">"n6QzIUObkYshz4dz2QRJTw",</div>
<div class="t" style="left:656px;top:767.63px;font-size:14.5px;line-height:14.5px;color:#a050b0;font-weight:normal;font-style:normal;font-family:'Liberation Sans', sans-serif;">te</div>
<div class="t" style="left:667px;top:768.05px;font-size:14px;line-height:14px;color:#444;font-weight:normal;font-style:normal;font-family:'Liberation Sans', sans-serif;">...</div>
<div class="t" style="left:684px;top:768.05px;font-size:14px;line-height:14px;color:#444;font-weight:normal;font-style:normal;font-family:'Liberation Sans', sans-serif;">}</div>
<svg class="r" style="left:750px;top:769.4px" width="8" height="10" viewBox="0 0 8 10"><path d="M0 0 L7.5 5 L0 10Z" fill="#7f9aa5"/></svg>
<div class="t" style="left:769.3px;top:767.08px;font-size:15.5px;line-height:15.5px;color:#444;font-weight:normal;font-style:normal;font-family:'Liberation Sans', sans-serif;">{</div>
<div class="t" style="left:773.5px;top:768.05px;font-size:14px;line-height:14px;color:#a050b0;font-weight:normal;font-style:normal;font-family:'Liberation Sans', sans-serif;transform:scaleX(1.12);transform-origin:0 0;">text:</div>
<div class="t" style="left:812px;top:768.05px;font-size:14px;line-height:14px;color:#444;font-weight:normal;font-style:normal;font-family:'Liberation Sans', sans-serif;transform:scaleX(1.08);transform-origin:0 0;">[...]},</div>
<svg class="r" style="left:59.8px;top:794.1px" width="8" height="10" viewBox="0 0 8 10"><path d="M0 0 L7.5 5 L0 10Z" fill="#7f9aa5"/></svg>
<div class="t" style="left:79.3px;top:791.78px;font-size:15.5px;line-height:15.5px;color:#444;font-weight:normal;font-style:normal;font-family:'Liberation Sans', sans-serif;">{</div>
<div class="t" style="left:84.3px;top:792.33px;font-size:14.5px;line-height:14.5px;color:#a050b0;font-weight:normal;font-style:normal;font-family:'Liberation Sans', sans-serif;">funny:</div>
<div class="t" style="left:132.7px;top:792.33px;font-size:14.5px;line-height:14.5px;color:#3b3bd6;font-weight:normal;font-style:normal;font-family:'Liberation Sans', sans-serif;">0</div>
<div class="t" style="left:140px;top:792.33px;font-size:14.5px;line-height:14.5px;color:#444;font-weight:normal;font-style:normal;font-family:'Liberation Sans', sans-serif;">,</div>
<div class="t" style="left:148.5px;top:792.33px;font-size:14.5px;line-height:14.5px;color:#a050b0;font-weight:normal;font-style:normal;font-family:'Liberation Sans', sans-serif;">user_id:</div>
<div class="t" style="left:210.8px;top:792.33px;font-size:14.5px;line-height:14.5px;color:#c0392b;font-weight:normal;font-style:normal;font-family:'Liberation Sans', sans-serif;transform:scaleX(0.9614);transform-origin:0 0;">"bv2nCi5Qv5vroFiqKGopiw",</div>
<div class="t" style="left:391px;top:792.33px;font-size:14.5px;line-height:14.5px;color:#a050b0;font-weight:normal;font-style:normal;font-family:'Liberation Sans', sans-serif;transform:scaleX(0.9959);transform-origin:0 0;">review_id:</div>
<div class="t" style="left:465.5px;top:792.33px;font-size:14.5px;line-height:14.5px;color:#c0392b;font-weight:normal;font-style:normal;font-family:'Liberation Sans', sans-serif;transform:scaleX(0.9537);transform-origin:0 0;">"MV3CcKScW05u5LVfF6ok0g",</div>
<div class="t" style="left:664px;top:792.33px;font-size:14.5px;line-height:14.5px;color:#a050b0;font-weight:normal;font-style:normal;font-family:'Liberation Sans', sans-serif;">t</div>
<div class="t" style="left:668px;top:792.75px;font-size:14px;line-height:14px;color:#444;font-weight:normal;font-style:normal;font-family:'Liberation Sans', sans-serif;">...</div>
<div class="t" style="left:684px;top:792.75px;font-size:14px;line-height:14px;color:#444;font-weight:normal;font-style:normal;font-family:'Liberation Sans', sans-serif;">}</div>
<svg class="r" style="left:750px;top:794.1px" width="8" height="10" viewBox="0 0 8 10"><path d="M0 0 L7.5 5 L0 10Z" fill="#7f9aa5"/></svg>
<div class="t" style="left:769.3px;top:791.78px;font-size:15.5px;line-height:15.5px;color:#444;font-weight:normal;font-style:normal;font-family:'Liberation Sans', sans-serif;">{</div>
<div class="t" style="left:773.5px;top:792.75px;font-size:14px;line-height:14px;color:#a050b0;font-weight:normal;font-style:normal;font-family:'Liberation Sans', sans-serif;transform:scaleX(1.12);transform-origin:0 0;">text:</div>
<div class="t" style="left:812px;top:792.75px;font-size:14px;line-height:14px;color:#444;font-weight:normal;font-style:normal;font-family:'Liberation Sans', sans-serif;transform:scaleX(1.08);transform-origin:0 0;">[...]},</div>
<svg class="r" style="left:59.8px;top:818.8px" width="8" height="10" viewBox="0 0 8 10"><path d="M0 0 L7.5 5 L0 10Z" fill="#7f9aa5"/></svg>
<div class="t" style="left:79.3px;top:816.48px;font-size:15.5px;line-height:15.5px;color:#444;font-weight:normal;font-style:normal;font-family:'Liberation Sans', sans-serif;">{</div>
<div class="t" style="left:84.3px;top:817.03px;font-size:14.5px;line-height:14.5px;color:#a050b0;font-weight:normal;font-style:normal;font-family:'Liberation Sans', sans-serif;">funny:</div>
<div class="t" style="left:132.7px;top:817.03px;font-size:14.5px;line-height:14.5px;color:#3b3bd6;font-weight:normal;font-style:normal;font-family:'Liberation Sans', sans-serif;">0</div>
<div class="t" style="left:140px;top:817.03px;font-size:14.5px;line-height:14.5px;color:#444;font-weight:normal;font-style:normal;font-family:'Liberation Sans', sans-serif;">,</div>
<div class="t" style="left:148.5px;top:817.03px;font-size:14.5px;line-height:14.5px;color:#a050b0;font-weight:normal;font-style:normal;font-family:'Liberation Sans', sans-serif;">user_id:</div>
<div class="t" style="left:210.8px;top:817.03px;font-size:14.5px;line-height:14.5px;color:#c0392b;font-weight:normal;font-style:normal;font-family:'Liberation Sans', sans-serif;transform:scaleX(0.9614);transform-origin:0 0;">"bv2nCi5Qv5vroFiqKGopiw",</div>
<div class="t" style="left:391px;top:817.03px;font-size:14.5px;line-height:14.5px;color:#a050b0;font-weight:normal;font-style:normal;font-family:'Liberation Sans', sans-serif;transform:scaleX(0.9959);transform-origin:0 0;">review_id:</div>
<div class="t" style="left:465.5px;top:817.03px;font-size:14.5px;line-height:14.5px;color:#c0392b;font-weight:normal;font-style:normal;font-family:'Liberation Sans', sans-serif;transform:scaleX(0.9253);transform-origin:0 0;">"IXvOzsEMYtiJI0CARmj77Q",</div>
<div class="t" style="left:646px;top:817.03px;font-size:14.5px;line-height:14.5px;color:#a050b0;font-weight:normal;font-style:normal;font-family:'Liberation Sans', sans-serif;">text</div>
<div class="t" style="left:671px;top:817.45px;font-size:14px;line-height:14px;color:#444;font-weight:normal;font-style:normal;font-family:'Liberation Sans', sans-serif;">...</div>
<div class="t" style="left:684px;top:817.45px;font-size:14px;line-height:14px;color:#444;font-weight:normal;font-style:normal;font-family:'Liberation Sans', sans-serif;">}</div>
<svg class="r" style="left:750px;top:818.8px" width="8" height="10" viewBox="0 0 8 10"><path d="M0 0 L7.5 5 L0 10Z" fill="#7f9aa5"/></svg>
<div class="t" style="left:769.3px;top:816.48px;font-size:15.5px;line-height:15.5px;color:#444;font-weight:normal;font-style:normal;font-family:'Liberation Sans', sans-serif;">{</div>
<div class="t" style="left:773.5px;top:817.45px;font-size:14px;line-height:14px;color:#a050b0;font-weight:normal;font-style:normal;font-family:'Liberation Sans', sans-serif;transform:scaleX(1.12);transform-origin:0 0;">text:</div>
<div class="t" style="left:812px;top:817.45px;font-size:14px;line-height:14px;color:#444;font-weight:normal;font-style:normal;font-family:'Liberation Sans', sans-serif;transform:scaleX(1.08);transform-origin:0 0;">[...]},</div>
<svg class="r" style="left:733px;top:700px" width="9" height="8" viewBox="0 0 9 8"><path d="M0 0 L9 0 L4.5 7.5Z" fill="#7f9aa5"/></svg>
<div class="t" style="left:751.8px;top:695.26px;font-size:16px;line-height:16px;color:#444;font-weight:normal;font-style:normal;font-family:'Liberation Sans', sans-serif;">[</div>
</body></html>
